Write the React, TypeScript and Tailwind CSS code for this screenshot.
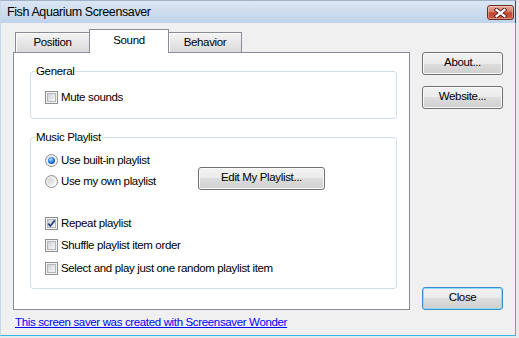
import React from "react";

function CheckBox({ checked }: { checked?: boolean }) {
  return (
    <span className="relative flex h-[13px] w-[13px] shrink-0 items-center justify-center border border-[#8e8f8f] bg-[#f4f4f4]">
      <span className="h-[9px] w-[9px] border border-[#b3b6ba] bg-linear-to-br from-[#cfd1d4] to-[#f8f8f8]" />
      {checked && (
        <svg className="absolute left-[1px] top-[1px]" width="9" height="9" viewBox="0 0 9 9">
          <path d="M1.2 4.6 L3.4 7 L7.8 1.4" fill="none" stroke="#25407a" strokeWidth="1.7" />
        </svg>
      )}
    </span>
  );
}

function Radio({ checked }: { checked?: boolean }) {
  return (
    <span className="flex h-[13px] w-[13px] shrink-0 items-center justify-center rounded-full border border-[#8e8f8f] bg-linear-to-br from-[#e2e2e2] to-white">
      {checked ? (
        <span className="h-[7px] w-[7px] rounded-full bg-[radial-gradient(circle_at_40%_35%,#a8dcff,#1d6fd3_55%,#0b3d88)]" />
      ) : (
        <span className="h-[7px] w-[7px] rounded-full bg-linear-to-br from-[#d0d0d0] to-[#f6f6f6]" />
      )}
    </span>
  );
}

function Button({ children, wide, focused }: { children: React.ReactNode; wide?: boolean; focused?: boolean }) {
  return (
    <div
      className={
        (wide ? "w-[127px] " : "w-[81px] ") +
        (focused
          ? "border-[#3c8ccf] shadow-[inset_0_0_0_1px_#8ddcf8] "
          : "border-[#707070] shadow-[inset_0_0_0_1px_#fbfbfb] ") +
        "flex h-[23px] shrink-0 items-center justify-center rounded-[3px] border bg-[linear-gradient(#f2f2f2,#ebebeb_50%,#dddddd_50%,#cfcfcf)] pb-[1px]"
      }
    >
      {children}
    </div>
  );
}

function TitleClose() {
  return (
    <div className="mt-[4px] flex h-[15px] w-[27px] items-center justify-center self-start rounded-[3px] border border-[#6c2b24] bg-[linear-gradient(#e9a99b,#d67a66_45%,#c2452f_52%,#d0583f)] shadow-[inset_0_0_0_1px_rgba(255,255,255,0.35)]">
      <svg width="13" height="10" viewBox="0 0 13 10">
        <path d="M2.5 1.8 L10.5 8.2 M10.5 1.8 L2.5 8.2" stroke="#4b1f1a" strokeWidth="4" strokeLinecap="square" fill="none" />
        <path d="M2.5 1.8 L10.5 8.2 M10.5 1.8 L2.5 8.2" stroke="#ffffff" strokeWidth="2.2" strokeLinecap="square" fill="none" />
      </svg>
    </div>
  );
}

export default function App() {
  return (
    <div className="relative h-[338px] w-[519px] overflow-hidden bg-[#e9e9e9] font-['Liberation_Sans',Arial,sans-serif] text-[11.5px] tracking-[-0.35px] text-black">
      <div className="flex h-[336px] w-[516px] flex-col">
        <div className="flex h-[23px] shrink-0 items-center justify-between border-l border-r border-t border-l-[#c9d7e6] border-r-[#3d4b5a] border-t-[#9fb2c6] bg-linear-to-b from-[#dbe6f3] to-[#bfd4ea] pl-[6px] pr-[1px]">
          <span className="pt-[1px] text-[12.5px] tracking-[-0.4px]">Fish Aquarium Screensaver</span>
          <TitleClose />
        </div>
        <div className="flex flex-1 flex-col border-b border-l border-r border-b-[#35b6e5] border-l-[#c5d8ea] border-r-[#35b6e5] bg-[#f0f0f0]">
          <div className="flex pl-[12px] pt-[6px]">
            <div className="flex w-[397px] flex-col">
              <div className="flex h-[23px] items-end pl-[2px]">
                <div className="flex h-[20px] w-[75px] items-center justify-center border border-b-0 border-[#898c95] bg-linear-to-b from-[#f4f4f4] to-[#dadada] pt-[1px] shadow-[inset_1px_1px_0_#fdfdfd]">
                  Position
                </div>
                <div className="relative z-10 -mb-px -ml-px flex h-[24px] w-[80px] items-center justify-center border border-b-0 border-[#898c95] bg-white pb-[1px]">
                  Sound
                </div>
                <div className="-ml-px flex h-[20px] w-[74px] items-center justify-center border border-b-0 border-[#898c95] bg-linear-to-b from-[#f4f4f4] to-[#dadada] pt-[1px] shadow-[inset_1px_1px_0_#fdfdfd]">
                  Behavior
                </div>
              </div>
              <div className="flex h-[258px] flex-col border border-[#898c95] bg-white">
                <div className="relative ml-[16px] mt-[18px] flex h-[48px] w-[367px] flex-col rounded-[3px] border border-[#d5dfe5] pl-[14px] pt-[19px]">
                  <span className="absolute -top-[8px] left-[4px] bg-white px-[1px] leading-[14px]">General</span>
                  <label className="flex h-[13px] items-center gap-[3px]">
                    <CheckBox />
                    <span>Mute sounds</span>
                  </label>
                </div>
                <div className="relative ml-[16px] mt-[18px] flex h-[152px] w-[367px] flex-col rounded-[3px] border border-[#d5dfe5] pl-[14px] pt-[16px]">
                  <span className="absolute -top-[8px] left-[4px] bg-white px-[1px] leading-[14px]">Music Playlist</span>
                  <label className="flex h-[13px] items-center gap-[3px]">
                    <Radio checked />
                    <span>Use built-in playlist</span>
                  </label>
                  <div className="flex items-start">
                    <label className="mt-[8px] flex h-[13px] w-[153px] items-center gap-[3px]">
                      <Radio />
                      <span>Use my own playlist</span>
                    </label>
                    <Button wide>Edit My Playlist...</Button>
                  </div>
                  <label className="mt-[27px] flex h-[13px] items-center gap-[3px]">
                    <CheckBox checked />
                    <span>Repeat playlist</span>
                  </label>
                  <label className="mt-[9px] flex h-[13px] items-center gap-[3px]">
                    <CheckBox />
                    <span>Shuffle playlist item order</span>
                  </label>
                  <label className="mt-[10px] flex h-[13px] items-center gap-[3px]">
                    <CheckBox />
                    <span>Select and play just one random playlist item</span>
                  </label>
                </div>
              </div>
            </div>
            <div className="ml-[12px] flex w-[81px] flex-col pt-[23px]">
              <Button>About...</Button>
              <div className="mt-[11px]">
                <Button>Website...</Button>
              </div>
              <div className="mt-auto">
                <Button focused>Close</Button>
              </div>
            </div>
          </div>
          <div className="mt-[5px] pl-[14px] leading-[14px]">
            <a className="text-[#0000ff] underline">This screen saver was created with Screensaver Wonder</a>
          </div>
        </div>
      </div>
    </div>
  );
}
